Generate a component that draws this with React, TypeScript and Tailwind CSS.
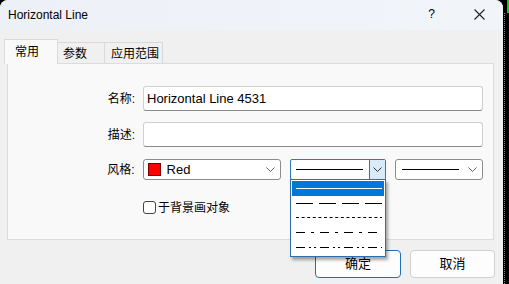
import React from "react";

const FONT = { fontFamily: '"Liberation Sans", "Noto Sans CJK SC", sans-serif' };

function Chevron({ color = "#606060" }: { color?: string }) {
  return (
    <svg width="9" height="5" viewBox="0 0 9 5" className="block">
      <path d="M0.5 0.5 L4.5 4.5 L8.5 0.5" fill="none" stroke={color} strokeWidth="1" />
    </svg>
  );
}

function Line({ dash, color = "#000", width }: { dash?: string; color?: string; width: number }) {
  return (
    <svg width={width} height="3" viewBox={`0 0 ${width} 3`} className="block">
      <line x1="0" y1="1.5" x2={width} y2="1.5" stroke={color} strokeWidth="1.2" strokeDasharray={dash} />
    </svg>
  );
}

export default function App() {
  return (
    <div className="w-[509px] h-[284px] bg-black flex overflow-hidden text-[#000]" style={FONT}>
      <div className="w-[503px] h-full bg-[#f0f0f0] rounded-t-[8px] flex flex-col overflow-hidden">
        {/* Title bar */}
        <div className="h-[30px] bg-gradient-to-r from-[#edf0f6] to-[#f1f5fa] flex items-center pl-[8px] shrink-0">
          <span className="text-[12px] leading-none">Horizontal Line</span>
          <div className="flex-1" />
          <span className="text-[12px] leading-none mr-[39px] mt-[-2px]">?</span>
          <svg width="11" height="11" viewBox="0 0 11 11" className="mr-[18px] mt-[-2px]">
            <path d="M0.5 0.5 L10.5 10.5 M10.5 0.5 L0.5 10.5" stroke="#222" strokeWidth="1.1" />
          </svg>
        </div>

        {/* Body */}
        <div className="flex flex-col px-[7px]">
          {/* Tabs */}
          <div className="flex items-end h-[24px] mt-[9px] ml-[-3px] relative z-10">
            <div className="h-[25px] mb-[-1px] w-[54px] bg-[#f9f9f9] border border-b-0 border-[#d9d9d9] flex items-start pl-[10px] pt-[3px] text-[12px]">
              常用
            </div>
            <div className="h-[21px] w-[47px] border border-l-0 border-b-0 border-[#d9d9d9] flex items-center pl-[5px] text-[12px] pt-[2px]">
              参数
            </div>
            <div className="h-[21px] w-[58px] border border-l-0 border-b-0 border-[#d9d9d9] flex items-center pl-[6px] text-[12px] pt-[2px]">
              应用范围
            </div>
          </div>

          {/* Panel */}
          <div className="h-[177px] w-[487px] bg-[#f9f9f9] border border-[#dcdcdc] flex flex-col pt-[22px] pr-[10px]">
            <div className="flex items-center h-[25px]">
              <div className="w-[127px] text-right text-[12px] mr-[8px]">名称:</div>
              <div className="flex-1 h-[25px] bg-white border border-[#d0d0d0] border-b-[#8a8a8a] rounded-[3px] flex items-center pl-[3px] text-[13px]">
                Horizontal Line 4531
              </div>
            </div>
            <div className="flex items-center h-[25px] mt-[11px]">
              <div className="w-[127px] text-right text-[12px] mr-[8px]">描述:</div>
              <div className="flex-1 h-[25px] bg-white border border-[#d0d0d0] border-b-[#8a8a8a] rounded-[3px]" />
            </div>
            <div className="flex items-center h-[21px] mt-[12px]">
              <div className="w-[127px] text-right text-[12px] mr-[8px]">风格:</div>
              {/* Color combo */}
              <div className="w-[139px] h-[21px] bg-white border border-[#8c8c8c] rounded-[3px] flex items-center pl-[4px] pr-[5px]">
                <div className="w-[13px] h-[13px] bg-[#ff0000] border border-[#7a0000]" />
                <span className="ml-[6px] text-[13px] leading-none">Red</span>
                <div className="flex-1" />
                <Chevron />
              </div>
              {/* Line style combo (open) */}
              <div className="relative w-[96px] h-[21px] ml-[9px]">
                <div className="w-full h-full bg-white border border-[#2f78b8] rounded-[2px] flex">
                  <div className="flex-1 flex items-center pl-[5px] pr-[6px]">
                    <Line width={67} />
                  </div>
                  <div className="w-[16px] h-full bg-[#d9ebf9] border-l border-[#2f78b8] flex items-center justify-center">
                    <Chevron color="#333" />
                  </div>
                </div>
                <div className="absolute left-0 top-[20px] w-[96px] h-[78px] bg-white border border-[#2f6ea8] shadow-[2px_3px_3px_rgba(0,0,0,0.35)] flex flex-col p-[1px] z-20">
                  <div className="h-[15px] bg-[#0078d7] flex items-center pl-[4px]">
                    <Line width={86} color="#fff" />
                  </div>
                  <div className="h-[15px] flex items-center pl-[4px]">
                    <Line width={86} dash="17 6" />
                  </div>
                  <div className="h-[15px] flex items-center pl-[4px]">
                    <Line width={86} dash="3 2.6" />
                  </div>
                  <div className="h-[15px] flex items-center pl-[4px]">
                    <Line width={86} dash="9 6 3 6" />
                  </div>
                  <div className="h-[15px] flex items-center pl-[4px]">
                    <Line width={86} dash="9 4 2 3 2 4" />
                  </div>
                </div>
              </div>
              {/* Width combo */}
              <div className="w-[88px] h-[21px] ml-[9px] bg-white border border-[#8c8c8c] rounded-[3px] flex items-center pl-[6px] pr-[5px]">
                <Line width={57} />
                <div className="flex-1" />
                <Chevron />
              </div>
            </div>
            <div className="flex items-center h-[13px] mt-[21px] pl-[135px]">
              <div className="w-[13px] h-[13px] bg-white border border-[#444] rounded-[3px]" />
              <span className="ml-[2px] text-[12px] leading-none">于背景画对象</span>
            </div>
          </div>

          {/* Buttons */}
          <div className="flex justify-end mt-[10px] pr-[1px]">
            <div className="w-[86px] h-[28px] bg-[#fdfdfd] border border-[#1f6fb5] rounded-[4px] flex items-center justify-center text-[13px]">
              确定
            </div>
            <div className="w-[85px] h-[28px] ml-[9px] bg-[#fdfdfd] border border-[#d0d0d0] rounded-[4px] flex items-center justify-center text-[13px]">
              取消
            </div>
          </div>
        </div>
      </div>
      {/* dark strip on the right */}
      <div className="w-[6px] h-full flex flex-col">
        <div className="h-[13px] flex">
          <div className="w-[4px] bg-black" />
          <div className="w-[2px] bg-[#22c222]" />
        </div>
        <div className="flex-1 border-l border-dotted border-[#888] ml-[1px]" />
      </div>
    </div>
  );
}
